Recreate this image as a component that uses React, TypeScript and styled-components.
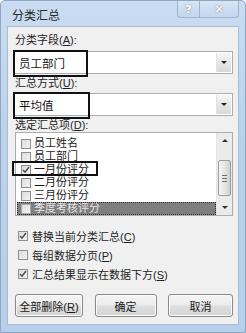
import React from "react";
import styled, { createGlobalStyle } from "styled-components";

const GlobalStyle = createGlobalStyle`
  html, body {
    margin: 0;
    padding: 0;
    background: #ffffff;
  }
  body {
    font-family: "Liberation Sans", "Noto Sans CJK SC", sans-serif;
  }
`;

const Window = styled.div`
  width: 246px;
  height: 333px;
  box-sizing: border-box;
  background: linear-gradient(180deg, #c9dcf1 0%, #bcd2ec 40%, #b7cfea 100%);
  border: 1px solid #8fa6c2;
  border-radius: 5px 5px 0 0;
  display: flex;
  flex-direction: column;
  overflow: hidden;
`;

const TitleBar = styled.div`
  height: 25px;
  display: flex;
  align-items: flex-start;
  justify-content: space-between;
  padding-left: 11px;
`;

const Title = styled.div`
  font-size: 12px;
  line-height: 14px;
  color: #2a2a2a;
  padding-top: 8px;
`;

const TitleButtons = styled.div`
  display: flex;
  margin-right: 6px;
`;

const CaptionButton = styled.div<{ $w: number }>`
  width: ${(p) => p.$w}px;
  height: 17px;
  box-sizing: border-box;
  border: 1px solid #9fb5cf;
  border-top: none;
  background: linear-gradient(180deg, #d7e5f5 0%, #c3d6ee 100%);
  display: flex;
  align-items: center;
  justify-content: center;
  color: #ffffff;
  font-family: "DejaVu Sans", sans-serif;
  font-size: 11px;
  font-weight: bold;
  text-shadow: 0 0 2px #6a7e96;
  & + & {
    border-left: none;
  }
  &:first-child {
    border-bottom-left-radius: 4px;
  }
  &:last-child {
    border-bottom-right-radius: 4px;
  }
`;

const Client = styled.div`
  flex: 1;
  margin: 0 6px 7px 6px;
  background: #f0f0f0;
  border: 1px solid #a8bcd4;
  display: flex;
  flex-direction: column;
  padding: 0 5px 0 6px;
`;

const Label = styled.div<{ $top: number }>`
  font-size: 11px;
  line-height: 14px;
  height: 14px;
  color: #1e1e1e;
  margin-top: ${(p) => p.$top}px;
  padding-left: 1px;
  white-space: nowrap;
`;

const Combo = styled.div<{ $top: number }>`
  position: relative;
  margin-top: ${(p) => p.$top}px;
  height: 23px;
  box-sizing: border-box;
  background: #ffffff;
  border: 1px solid #abadb3;
  display: flex;
  align-items: center;
  justify-content: space-between;
`;

const ComboText = styled.div`
  font-size: 11.5px;
  color: #111;
  padding-left: 4px;
`;

const ComboArrow = styled.div`
  width: 14px;
  height: 19px;
  margin-right: 1px;
  background: linear-gradient(180deg, #f6f6f6 0%, #e6e6e6 50%, #d9d9d9 100%);
  border-left: 1px solid #e2e2e2;
  display: flex;
  align-items: center;
  justify-content: center;
  &::after {
    content: "";
    border-left: 3px solid transparent;
    border-right: 3px solid transparent;
    border-top: 3px solid #222;
  }
`;

const Mark = styled.div<{ $l: number; $t: number; $w: number; $h: number }>`
  position: absolute;
  left: ${(p) => p.$l}px;
  top: ${(p) => p.$t}px;
  width: ${(p) => p.$w}px;
  height: ${(p) => p.$h}px;
  box-sizing: border-box;
  border: 2px solid #111;
  pointer-events: none;
`;

const ListBox = styled.div`
  position: relative;
  margin-left: 1px;
  height: 84px;
  box-sizing: border-box;
  background: #ffffff;
  border: 1px solid #abadb3;
  display: flex;
`;

const ListItems = styled.div`
  flex: 1;
  padding-top: 4px;
  display: flex;
  flex-direction: column;
`;

const ListRow = styled.div<{ $selected?: boolean }>`
  height: 13px;
  line-height: 13px;
  display: flex;
  align-items: center;
  gap: 3px;
  padding-left: 4px;
  margin-left: 1px;
  font-size: 11px;
  color: ${(p) => (p.$selected ? "#e4e4e4" : "#1a1a1a")};
  background: ${(p) => (p.$selected ? "#7f7f7f" : "transparent")};
  outline: ${(p) => (p.$selected ? "1px dotted #333" : "none")};
  outline-offset: -1px;
  white-space: nowrap;
`;

const Box = styled.div<{ $dim?: boolean }>`
  width: 10px;
  height: 10px;
  flex: none;
  box-sizing: border-box;
  border: 1px solid ${(p) => (p.$dim ? "#a9a9a9" : "#8e8f8f")};
  background: linear-gradient(135deg, #dcdcdc 0%, #f4f4f4 100%);
  display: flex;
  align-items: center;
  justify-content: center;
`;

const Tick = () => (
  <svg width="8" height="8" viewBox="0 0 8 8">
    <path d="M1 4 L3 6.2 L7 1" stroke="#4a4a4a" strokeWidth="1.4" fill="none" />
  </svg>
);

const ScrollBar = styled.div`
  width: 15px;
  flex: none;
  background: #ebebeb;
  border-left: 1px solid #e4e4e4;
  display: flex;
  flex-direction: column;
  align-items: center;
`;

const ScrollArrow = styled.div<{ $up?: boolean }>`
  height: 15px;
  width: 15px;
  display: flex;
  align-items: center;
  justify-content: center;
  &::after {
    content: "";
    border-left: 3px solid transparent;
    border-right: 3px solid transparent;
    ${(p) =>
      p.$up ? "border-bottom: 3px solid #333;" : "border-top: 3px solid #333;"}
  }
`;

const Thumb = styled.div`
  width: 13px;
  height: 36px;
  margin-top: 12px;
  box-sizing: border-box;
  border: 1px solid #9c9c9c;
  border-radius: 2px;
  background: linear-gradient(90deg, #f5f5f5 0%, #e2e2e2 60%, #d0d0d0 100%);
  display: flex;
  flex-direction: column;
  align-items: center;
  justify-content: center;
  gap: 2px;
`;

const Grip = styled.div`
  width: 5px;
  height: 1px;
  background: #6e6e6e;
`;

const Spacer = styled.div`
  flex: 1;
`;

const CheckRow = styled.div<{ $top: number }>`
  margin-top: ${(p) => p.$top}px;
  height: 14px;
  display: flex;
  align-items: center;
  gap: 4px;
  padding-left: 4px;
  font-size: 11px;
  color: #1e1e1e;
  white-space: nowrap;
`;

const ButtonRow = styled.div`
  margin-top: 13px;
  display: flex;
  justify-content: space-between;
  padding-left: 1px;
`;

const Button = styled.div<{ $w: number }>`
  width: ${(p) => p.$w}px;
  height: 23px;
  box-sizing: border-box;
  border: 1px solid #8a8a8a;
  border-radius: 3px;
  background: linear-gradient(180deg, #f4f4f4 0%, #ececec 48%, #dedede 52%, #d6d6d6 100%);
  box-shadow: inset 0 0 0 1px #fbfbfb;
  display: flex;
  align-items: center;
  justify-content: center;
  font-size: 11px;
  color: #1a1a1a;
`;

const U = styled.span`
  text-decoration: underline;
`;

const listItems = [
  { text: "员工姓名" },
  { text: "员工部门" },
  { text: "一月份评分", checked: true },
  { text: "二月份评分" },
  { text: "三月份评分" },
  { text: "季度考核评分", selected: true },
];

export default function App() {
  return (
    <>
      <GlobalStyle />
      <Window>
        <TitleBar>
          <Title>分类汇总</Title>
          <TitleButtons>
            <CaptionButton $w={23}>?</CaptionButton>
            <CaptionButton $w={39}>✕</CaptionButton>
          </TitleButtons>
        </TitleBar>
        <Client>
          <Label $top={6}>
            分类字段(<U>A</U>):
          </Label>
          <Combo $top={4}>
            <ComboText>员工部门</ComboText>
            <ComboArrow />
            <Mark $l={-2} $t={-2} $w={75} $h={27} />
          </Combo>
          <Label $top={2}>
            汇总方式(<U>U</U>):
          </Label>
          <Combo $top={3}>
            <ComboText>平均值</ComboText>
            <ComboArrow />
            <Mark $l={-2} $t={-2} $w={77} $h={27} />
          </Combo>
          <Label $top={2}>
            选定汇总项(<U>D</U>):
          </Label>
          <ListBox>
            <ListItems>
              {listItems.map((it) => (
                <ListRow key={it.text} $selected={it.selected}>
                  <Box $dim={it.selected}>{it.checked && <Tick />}</Box>
                  <span>{it.text}</span>
                </ListRow>
              ))}
            </ListItems>
            <ScrollBar>
              <ScrollArrow $up />
              <Thumb>
                <Grip />
                <Grip />
                <Grip />
              </Thumb>
              <Spacer />
              <ScrollArrow />
            </ScrollBar>
            <Mark $l={-4} $t={28} $w={86} $h={15} />
          </ListBox>
          <CheckRow $top={13}>
            <Box>
              <Tick />
            </Box>
            <span>
              替换当前分类汇总(<U>C</U>)
            </span>
          </CheckRow>
          <CheckRow $top={5}>
            <Box />
            <span>
              每组数据分页(<U>P</U>)
            </span>
          </CheckRow>
          <CheckRow $top={5}>
            <Box>
              <Tick />
            </Box>
            <span>
              汇总结果显示在数据下方(<U>S</U>)
            </span>
          </CheckRow>
          <ButtonRow>
            <Button $w={68}>
              <span>
                全部删除(<U>R</U>)
              </span>
            </Button>
            <Button $w={62}>确定</Button>
            <Button $w={65}>取消</Button>
          </ButtonRow>
        </Client>
      </Window>
    </>
  );
}
